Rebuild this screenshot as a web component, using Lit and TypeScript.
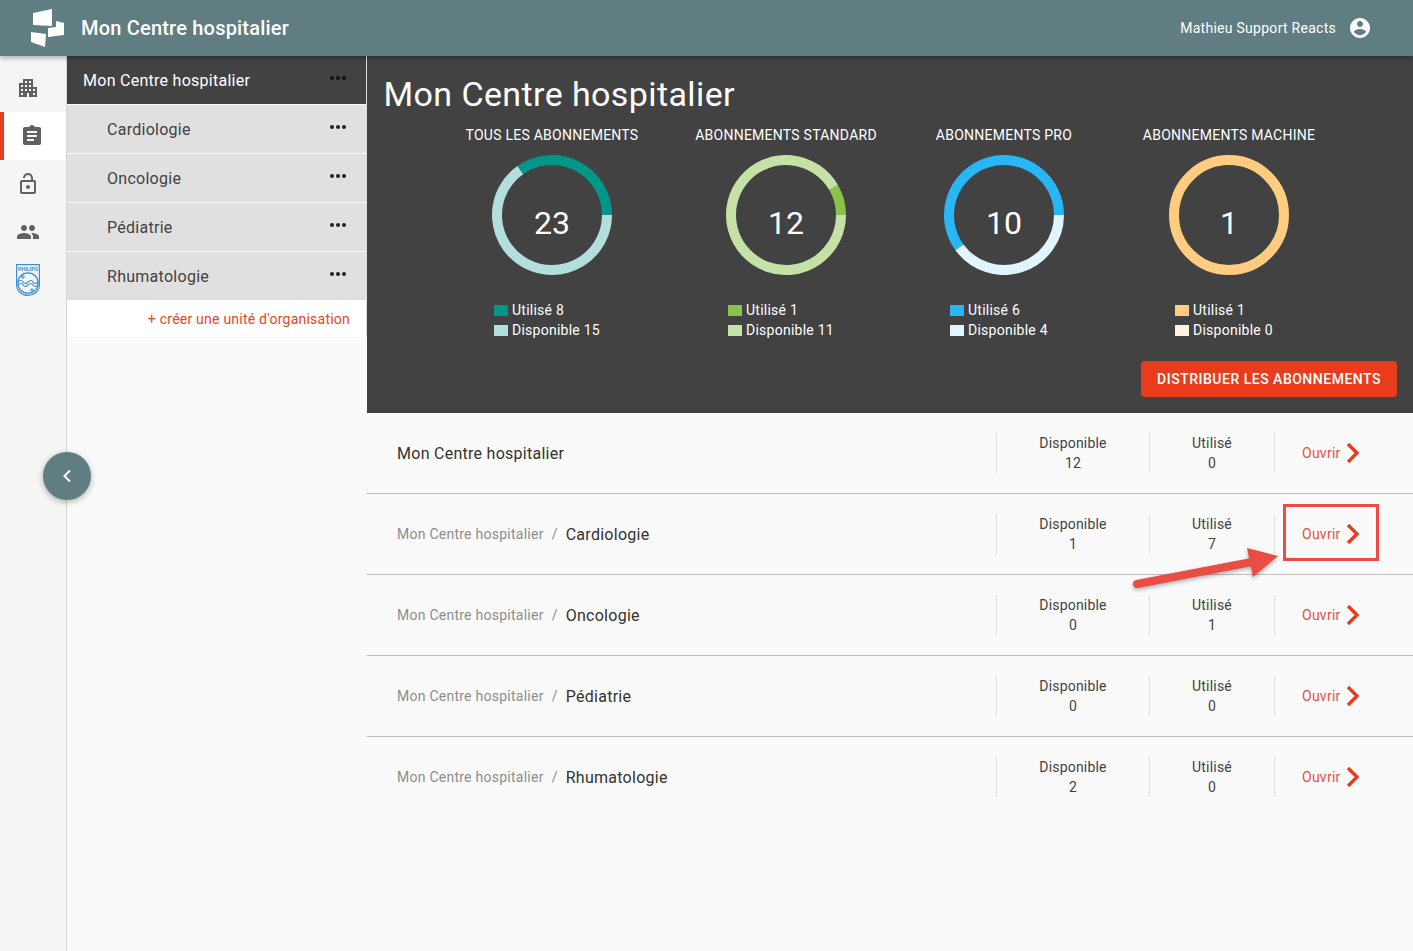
import { LitElement, html, css, svg } from "lit";
import { customElement } from "lit/decorators.js";

const P = {
  building: "M17 11V3H7v4H3v14h8v-4h2v4h8V11h-4zM7 19H5v-2h2v2zm0-4H5v-2h2v2zm0-4H5V9h2v2zm4 4H9v-2h2v2zm0-4H9V9h2v2zm0-4H9V5h2v2zm4 8h-2v-2h2v2zm0-4h-2V9h2v2zm0-4h-2V5h2v2zm4 12h-2v-2h2v2zm0-4h-2v-2h2v2z",
  clip: "M19 3h-4.18C14.4 1.84 13.3 1 12 1c-1.3 0-2.4.84-2.82 2H5c-1.1 0-2 .9-2 2v14c0 1.1.9 2 2 2h14c1.1 0 2-.9 2-2V5c0-1.1-.9-2-2-2zm-5 14H7v-2h7v2zm3-4H7v-2h10v2zm0-4H7V7h10v2z",
  lock: "M12 17c1.1 0 2-.9 2-2s-.9-2-2-2-2 .9-2 2 .9 2 2 2zm6-9h-1V6c0-2.76-2.24-5-5-5S7 3.24 7 6h1.9c0-1.71 1.39-3.1 3.1-3.1 1.71 0 3.1 1.39 3.1 3.1v2H6c-1.1 0-2 .9-2 2v10c0 1.1.9 2 2 2h12c1.1 0 2-.9 2-2V10c0-1.1-.9-2-2-2zm0 12H6V10h12v10z",
  people: "M16 11c1.66 0 2.99-1.34 2.99-3S17.66 5 16 5c-1.66 0-3 1.34-3 3s1.34 3 3 3zm-8 0c1.66 0 2.99-1.34 2.99-3S9.66 5 8 5C6.34 5 5 6.34 5 8s1.34 3 3 3zm0 2c-2.33 0-7 1.17-7 3.5V19h14v-2.5c0-2.33-4.67-3.5-7-3.5zm8 0c-.29 0-.62.02-.97.05 1.16.84 1.97 1.97 1.97 3.45V19h6v-2.5c0-2.33-4.67-3.5-7-3.5z",
  account: "M12 2C6.48 2 2 6.48 2 12s4.48 10 10 10 10-4.48 10-10S17.52 2 12 2zm0 3c1.66 0 3 1.34 3 3s-1.34 3-3 3-3-1.34-3-3 1.34-3 3-3zm0 14.2c-2.5 0-4.71-1.28-6-3.22.03-1.99 4-3.08 6-3.08 1.99 0 5.97 1.09 6 3.08-1.29 1.94-3.5 3.22-6 3.22z",
};

const icon = (d: string, size = 24) => html`<svg width=${size} height=${size} viewBox="0 0 24 24"><path d=${d} fill="currentColor"></path></svg>`;

const dots = html`<svg class="dots" width="16" height="4" viewBox="0 0 16 4"><circle cx="2" cy="2" r="2"></circle><circle cx="8" cy="2" r="2"></circle><circle cx="14" cy="2" r="2"></circle></svg>`;

function arc(r: number, from: number, to: number) {
  const a = (from * Math.PI) / 180, b = (to * Math.PI) / 180;
  const x1 = 60 + r * Math.cos(a), y1 = 60 - r * Math.sin(a);
  const x2 = 60 + r * Math.cos(b), y2 = 60 - r * Math.sin(b);
  const large = to - from > 180 ? 1 : 0;
  return `M${x1} ${y1}A${r} ${r} 0 ${large} 0 ${x2} ${y2}`;
}

const stats = [
  { title: "Tous les abonnements", used: 8, free: 15, c1: "#009688", c2: "#b2dfdb", col: "" },
  { title: "Abonnements standard", used: 1, free: 11, c1: "#8bc34a", c2: "#c5e1a5", col: "" },
  { title: "Abonnements pro", used: 6, free: 4, c1: "#29b6f6", c2: "#e1f5fe", col: "narrow" },
  { title: "Abonnements machine", used: 1, free: 0, c1: "#ffcc80", c2: "#fff3e0", col: "narrow" },
];

const rows = [
  { name: "", self: "Mon Centre hospitalier", d: 12, u: 0 },
  { name: "Mon Centre hospitalier", self: "Cardiologie", d: 1, u: 7 },
  { name: "Mon Centre hospitalier", self: "Oncologie", d: 0, u: 1 },
  { name: "Mon Centre hospitalier", self: "Pédiatrie", d: 0, u: 0 },
  { name: "Mon Centre hospitalier", self: "Rhumatologie", d: 2, u: 0 },
];

@customElement("app-root")
export class AppRoot extends LitElement {
  static styles = css`
    :host { display: block; position: relative; height: 951px; overflow: hidden; background: #fafafa; font-family: Roboto, "Liberation Sans", sans-serif; color: #424242; letter-spacing: .25px; }
    .top { height: 56px; background: #607d82; display: flex; align-items: center; color: #fff; box-shadow: 0 2px 5px rgba(0,0,0,.3); position: relative; z-index: 2; }
    .logo { margin-left: 29px; width: 36px; height: 40px; flex: none; }
    .brand { margin-left: 16px; font-size: 20px; font-weight: 500; flex: 1; letter-spacing: .2px; }
    .user { font-size: 14px; letter-spacing: .27px; }
    .acc { display: flex; margin: 0 41px 0 12px; }
    .body { display: flex; height: 895px; }
    .rail { width: 66px; flex: none; border-right: 1px solid #d6d6d6; padding-top: 8px; background: #f5f5f5; }
    .rail-item { height: 48px; display: flex; align-items: center; justify-content: center; color: #616161; padding-right: 10px; }
    .rail-item.on { background: #fff; border-left: 4px solid #e93e1e; padding-right: 6px; }
    .panel { width: 300px; flex: none; }
    .tree { border-right: 1px solid #dcdcdc; }
    .unit { height: 48px; margin-bottom: 1px; background: #e0e0e0; display: flex; align-items: center; justify-content: space-between; padding: 0 20px 0 40px; font-size: 16px; letter-spacing: .27px; color: #424242; }
    .unit.root { background: #424242; color: #fff; padding-left: 16px; }
    .unit.root .dots { fill: #111; }
    .dots { fill: #212121; margin-bottom: 5px; flex: none; }
    .create { height: 37px; background: #fff; text-align: right; padding-right: 16px; font-size: 14px; line-height: 38px; color: #e9432a; margin-top: -1px; letter-spacing: .23px; }
    .main { flex: 1; min-width: 0; background: #fafafa; }
    .dash { height: 357px; background: #424242; color: #fff; padding-top: 18px; box-sizing: border-box; }
    h1 { margin: 0 0 12px 16.5px; font-size: 34px; font-weight: 400; line-height: 40px; letter-spacing: .4px; }
    .cols { display: grid; grid-template-columns: 234px 234px 202px 248px; padding-left: 68px; }
    .col { display: flex; flex-direction: column; align-items: center; }
    .col-t { font-size: 14px; line-height: 18px; text-transform: uppercase; white-space: nowrap; margin-bottom: 11px; }
    .donut { display: grid; width: 120px; height: 120px; }
    .donut > * { grid-area: 1 / 1; }
    .num { place-self: center; font-size: 32px; line-height: 40px; padding-top: 16px; letter-spacing: 0; }
    .legend { margin-top: 25px; width: 116px; font-size: 14px; line-height: 20px; }
    .legend.narrow { width: 108px; }
    .lg { display: flex; align-items: center; white-space: nowrap; }
    .sw { width: 14px; height: 11px; margin-right: 4px; flex: none; }
    .act { display: flex; justify-content: flex-end; padding: 21px 16px 0 0; }
    .btn { height: 36px; width: 256px; border: 0; border-radius: 4px; background: #e93c1c; color: #fff; font: 500 14px Roboto, sans-serif; letter-spacing: .5px; text-transform: uppercase; }
    .row { height: 80px; display: flex; align-items: center; border-bottom: 1px solid #bdbdbd; padding-left: 30px; }
    .row:last-child { border-bottom: 0; }
    .nm { flex: 1; font-size: 16px; color: #333; letter-spacing: .27px; }
    .crumb { font-size: 14px; color: #8d8d8d; letter-spacing: .25px; vertical-align: 1px; }
    .sep { font-size: 14px; color: #8d8d8d; margin: 0 8px; vertical-align: 1px; }
    .cell { height: 40px; border-left: 1px solid #e0e0e0; font-size: 14px; line-height: 20px; text-align: center; flex: none; box-sizing: border-box; letter-spacing: .2px; }
    .c1 { width: 153px; }
    .c2 { width: 125px; }
    .c3 { width: 139px; display: flex; align-items: center; padding-left: 27px; color: #e9503f; text-align: left; letter-spacing: .25px; }
    .c3 svg { margin-left: 5px; }
    .fab { position: absolute; left: 43px; top: 452px; width: 48px; height: 48px; border-radius: 50%; background: #607d82; box-shadow: 0 2px 6px rgba(0,0,0,.3); display: flex; align-items: center; justify-content: center; z-index: 3; }
    .mark { position: absolute; left: 1283px; top: 504px; width: 96px; height: 57px; border: 3px solid #ee4b45; box-sizing: border-box; }
    .arrow { position: absolute; left: 1120px; top: 535px; filter: drop-shadow(0 2px 2px rgba(0,0,0,.3)); }
  `;

  donut(s: (typeof stats)[number]) {
    const total = s.used + s.free;
    const ang = (s.used / total) * 360;
    return html`<div class="donut">
      <svg width="120" height="120" viewBox="0 0 120 120" fill="none" stroke-width="10">
        ${s.free === 0
          ? svg`<circle cx="60" cy="60" r="55" stroke=${s.c1}></circle>`
          : svg`<path d=${arc(55, 0, ang)} stroke=${s.c1}></path><path d=${arc(55, ang, 360)} stroke=${s.c2}></path>`}
      </svg>
      <div class="num">${total}</div>
    </div>`;
  }

  render() {
    return html`
      <header class="top">
        <svg class="logo" viewBox="0 0 36 40" fill="#fff">
          <path d="M4 5L23 1V18L4 17Z"></path>
          <path d="M19 20L27 19V13L35 15V27L19 29Z"></path>
          <path d="M2 24L17 26L16 39L2 34Z"></path>
        </svg>
        <div class="brand">Mon Centre hospitalier</div>
        <div class="user">Mathieu Support Reacts</div>
        <div class="acc">${icon(P.account)}</div>
      </header>
      <div class="body">
        <nav class="rail">
          <div class="rail-item">${icon(P.building)}</div>
          <div class="rail-item on">${icon(P.clip)}</div>
          <div class="rail-item">${icon(P.lock)}</div>
          <div class="rail-item">${icon(P.people)}</div>
          <div class="rail-item">
            <svg width="24" height="32" viewBox="0 0 24 32" fill="none" stroke="#3d8fd0">
              <path d="M.6.6H23.4V21C23.4 27 18 31.4 12 31.4S.6 27 .6 21Z" stroke-width="1.2"></path>
              <text x="12" y="7" text-anchor="middle" font-family="Roboto" font-size="5.4" font-weight="700" letter-spacing="0" fill="#3d8fd0" stroke="none">PHILIPS</text>
              <circle cx="12" cy="19" r="10.2" stroke-width="1.2"></circle>
              <path d="M2 18c2-2 4-2 5 0s3 2 5 0 4-2 5 0 3 2 5 0M2 21c2-2 4-2 5 0s3 2 5 0 4-2 5 0 3 2 5 0" stroke-width="1.2"></path>
              <path d="M7 11v4M5 13h4M16 24v4M14 26h4" stroke-width="1"></path>
            </svg>
          </div>
        </nav>
        <aside class="panel">
          <div class="tree">
            <div class="unit root"><span>Mon Centre hospitalier</span>${dots}</div>
            ${["Cardiologie", "Oncologie", "Pédiatrie", "Rhumatologie"].map((n) => html`<div class="unit"><span>${n}</span>${dots}</div>`)}
            <div class="create">+ créer une unité d'organisation</div>
          </div>
        </aside>
        <main class="main">
          <section class="dash">
            <h1>Mon Centre hospitalier</h1>
            <div class="cols">
              ${stats.map((s) => html`<div class="col">
                <div class="col-t">${s.title}</div>
                ${this.donut(s)}
                <div class="legend ${s.col}">
                  <div class="lg"><span class="sw" style="background:${s.c1}"></span>Utilisé ${s.used}</div>
                  <div class="lg"><span class="sw" style="background:${s.c2}"></span>Disponible ${s.free}</div>
                </div>
              </div>`)}
            </div>
            <div class="act"><button class="btn">Distribuer les abonnements</button></div>
          </section>
          ${rows.map((r) => html`<div class="row">
            <div class="nm">${r.name ? html`<span class="crumb">${r.name}</span><span class="sep">/</span>` : ""}${r.self}</div>
            <div class="cell c1">Disponible<br />${r.d}</div>
            <div class="cell c2">Utilisé<br />${r.u}</div>
            <div class="cell c3">Ouvrir
              <svg width="14" height="20" viewBox="0 0 14 20" fill="none" stroke="#e93c1c" stroke-width="3.4"><path d="M2 1L11 10L2 19"></path></svg>
            </div>
          </div>`)}
        </main>
      </div>
      <div class="fab"><svg width="12" height="14" viewBox="0 0 12 14" fill="none" stroke="#fff" stroke-width="2"><path d="M9 1.5L3.5 7L9 12.5"></path></svg></div>
      <div class="mark"></div>
      <svg class="arrow" width="170" height="60" viewBox="0 0 170 60">
        <path d="M17 49L132 27" stroke="#ea4c46" stroke-width="8" stroke-linecap="round"></path>
        <path d="M127 13L158 21L133 42Z" fill="#ea4c46"></path>
      </svg>
    `;
  }
}
